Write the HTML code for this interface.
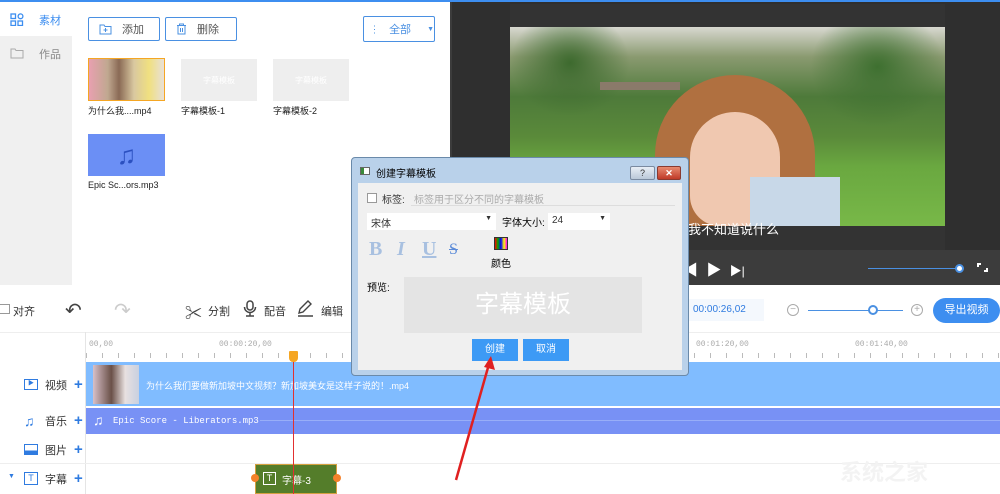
<!DOCTYPE html>
<html><head><meta charset="utf-8"><style>
*{margin:0;padding:0;box-sizing:border-box}
body{width:1000px;height:494px;overflow:hidden;position:relative;background:#fff;font-family:"Liberation Sans","Noto Sans CJK SC",sans-serif;font-size:11px;color:#333}
.a{position:absolute;white-space:nowrap}
.btn{position:absolute;border:1px solid #4a90e2;border-radius:2px;color:#4a90e2;font-size:11px;display:flex;align-items:center;padding-left:10px;gap:10px;background:#fff;white-space:nowrap}
.thumb{position:absolute;width:76px;height:42px;background:#eee;color:#fff;font-size:8px;display:flex;align-items:center;justify-content:center;white-space:nowrap}
.lbl{position:absolute;font-size:9px;color:#222;white-space:nowrap}
.tl{position:absolute;font-size:11px;color:#333;display:flex;align-items:center;gap:7px;white-space:nowrap}
.plus{color:#2f7be0;font-size:15px;font-weight:bold}
</style></head><body>
<div class="a" style="left:0;top:0;width:1000px;height:2px;background:#3d8ef0"></div>
<div class="a" style="left:0;top:2px;width:72px;height:283px;background:#f0f0f0"></div>
<div class="a" style="left:0;top:2px;width:72px;height:34px;background:#fff"></div>
<svg class="a" style="left:10px;top:13px" width="14" height="13"><g fill="none" stroke="#3d8ef0" stroke-width="1.3"><rect x="1" y="1" width="4.5" height="4.5"/><rect x="1" y="8" width="4.5" height="4.5"/><circle cx="10.5" cy="3.3" r="2.4"/><rect x="8" y="8" width="4.5" height="4.5"/></g></svg>
<div class="a" style="left:39px;top:12px;color:#3d8ef0;font-size:11px">素材</div>
<svg class="a" style="left:10px;top:47px" width="14" height="12"><path d="M1 2h4l1 1.5h7V11H1z" fill="none" stroke="#aaa"/></svg>
<div class="a" style="left:39px;top:46px;color:#888;font-size:11px">作品</div>
<div class="btn" style="left:88px;top:17px;width:72px;height:24px"><svg width="13" height="11"><path d="M1 1h4l1 1.5h6V10H1z M6.5 4v4M4.5 6h4" fill="none" stroke="#4a90e2"/></svg><span style="color:#555">添加</span></div>
<div class="btn" style="left:165px;top:17px;width:72px;height:24px"><svg width="11" height="12"><path d="M1 2.5h9M3.5 2.5V1h4v1.5M2 3v8h7V3M4.5 5v4M6.5 5v4" fill="none" stroke="#4a90e2"/></svg><span style="color:#555">删除</span></div>
<div class="btn" style="left:363px;top:16px;width:72px;height:26px;gap:12px"><svg width="11" height="9"><path d="M0 1h1M3 1h8M0 4.5h1M3 4.5h8M0 8h1M3 8h8" stroke="#4a90e2"/></svg><span>全部</span><span style="font-size:7px;margin-left:4px">▼</span></div>
<div class="a" style="left:88px;top:58px;width:77px;height:43px;border:1.5px solid #f5a623;background:linear-gradient(90deg,#e8a0b0 0%,#c0a890 25%,#8a6a55 40%,#d9c8a0 60%,#f0e080 80%,#e8e0d8 100%)"></div>
<div class="lbl" style="left:88px;top:104px">为什么我....mp4</div>
<div class="thumb" style="left:181px;top:59px">字幕模板</div><div class="lbl" style="left:181px;top:104px">字幕模板-1</div>
<div class="thumb" style="left:273px;top:59px">字幕模板</div><div class="lbl" style="left:273px;top:104px">字幕模板-2</div>
<div class="a" style="left:88px;top:134px;width:77px;height:42px;background:#6b8ff5;color:#2b50c0;font-size:26px;text-align:center;line-height:42px">♫</div>
<div class="lbl" style="left:88px;top:180px">Epic Sc...ors.mp3</div>
<div class="a" style="left:450px;top:2px;width:550px;height:283px;background:#3c3c3c"></div>
<div class="a" style="left:452px;top:2px;width:548px;height:248px;background:#2f2f2f"></div>
<div class="a" style="left:510px;top:4px;width:435px;height:246px;background:#333"></div>
<div class="a" style="left:510px;top:27px;width:435px;height:199px;overflow:hidden;background:linear-gradient(180deg,#d8d8d0 0%,#8a9a70 15%,#4e7a3a 35%,#5a8a3a 55%,#6aa840 70%,#78b848 100%)">
 <div class="a" style="left:0;top:0;width:120px;height:90px;background:radial-gradient(ellipse at 50% 40%,#3d6a2e,rgba(60,100,40,0) 70%)"></div>
 <div class="a" style="left:300px;top:0;width:135px;height:100px;background:radial-gradient(ellipse at 50% 40%,#3e7030,rgba(60,100,40,0) 70%)"></div>
 <div class="a" style="left:90px;top:55px;width:80px;height:8px;background:#8a7a6a"></div>
 <div class="a" style="left:145px;top:48px;width:160px;height:151px;border-radius:80px 80px 0 0;background:#b07040"></div>
 <div class="a" style="left:180px;top:85px;width:90px;height:114px;border-radius:45px 45px 30px 30px;background:#f0c8b0"></div>
 <div class="a" style="left:240px;top:150px;width:90px;height:49px;background:#c8d8e8"></div>
</div>
<div class="a" style="left:688px;top:219px;color:#fff;font-size:13px">我不知道说什么</div>
<div class="a" style="left:683px;top:259px;color:#fff;font-size:15px">◀ &nbsp;▶ &nbsp;<span style="font-size:12px">▶|</span></div>
<div class="a" style="left:868px;top:268px;width:92px;height:1px;background:#4a90e2"></div>
<div class="a" style="left:955px;top:264px;width:9px;height:9px;border-radius:50%;background:#fff;border:2px solid #4a90e2"></div>
<div class="a" style="left:977px;top:263px;border-left:2px solid #fff;border-top:2px solid #fff;width:4px;height:4px"></div>
<div class="a" style="left:984px;top:268px;width:4px;height:4px;border-right:2px solid #fff;border-bottom:2px solid #fff"></div>
<div class="a" style="left:0;top:332px;width:1000px;height:1px;background:#eee"></div>
<div class="a" style="left:0;top:304px;width:10px;height:10px;border:1px solid #999;border-left:none"></div>
<div class="a" style="left:13px;top:303px;font-size:11px">对齐</div>
<div class="a" style="left:65px;top:298px;font-size:20px;color:#444">↶</div>
<div class="a" style="left:114px;top:298px;font-size:20px;color:#ccc">↷</div>
<div class="a" style="left:185px;top:299px;font-size:17px;color:#444">✂</div><div class="a" style="left:208px;top:303px;font-size:11px">分割</div>
<svg class="a" style="left:243px;top:300px" width="14" height="17"><rect x="4" y="1" width="6" height="9" rx="3" fill="none" stroke="#444" stroke-width="1.5"/><path d="M1.5 7a5.5 5.5 0 0 0 11 0M7 12.5v3M3 16h8" fill="none" stroke="#444" stroke-width="1.5"/></svg><div class="a" style="left:264px;top:303px;font-size:11px">配音</div>
<svg class="a" style="left:297px;top:300px" width="17" height="17"><path d="M2 13l1-4 8-8 3 3-8 8z M1 16h15" fill="none" stroke="#444" stroke-width="1.4"/></svg><div class="a" style="left:321px;top:303px;font-size:11px">编辑</div>
<div class="a" style="left:688px;top:299px;width:76px;height:22px;background:#f4f8fd;color:#2f7be0;font-size:10px;line-height:22px;padding-left:5px">00:00:26,02</div>
<div class="a" style="left:787px;top:304px;width:12px;height:12px;border:1px solid #aaa;border-radius:50%;color:#aaa;font-size:10px;line-height:9px;text-align:center">−</div>
<div class="a" style="left:808px;top:310px;width:95px;height:1px;background:#4a90e2"></div>
<div class="a" style="left:868px;top:305px;width:10px;height:10px;border:2px solid #4a90e2;border-radius:50%;background:#fff"></div>
<div class="a" style="left:911px;top:304px;width:12px;height:12px;border:1px solid #aaa;border-radius:50%;color:#aaa;font-size:10px;line-height:10px;text-align:center">+</div>
<div class="a" style="left:933px;top:298px;width:67px;height:25px;border-radius:13px;background:#3d8ef0;color:#fff;font-size:11px;line-height:25px;text-align:center">导出视频</div>
<div class="a" style="left:85px;top:332px;width:1px;height:162px;background:#e5e5e5"></div>
<div class="a" style="left:89px;top:340px;font-size:8px;color:#aaa;font-family:'Liberation Mono',monospace">00,00</div>
<div class="a" style="left:219px;top:340px;font-size:8px;color:#aaa;font-family:'Liberation Mono',monospace">00:00:20,00</div>
<div class="a" style="left:696px;top:340px;font-size:8px;color:#aaa;font-family:'Liberation Mono',monospace">00:01:20,00</div>
<div class="a" style="left:855px;top:340px;font-size:8px;color:#aaa;font-family:'Liberation Mono',monospace">00:01:40,00</div>
<div class="a" style="left:86px;top:353px;width:914px;height:5px;background:repeating-linear-gradient(90deg,#bbb 0 1px,transparent 1px 16px)"></div>
<div class="a" style="left:86px;top:362px;width:914px;height:44px;background:#80bcff"></div>
<div class="a" style="left:93px;top:365px;width:46px;height:39px;background:linear-gradient(90deg,#d8c0c8,#6a5048 40%,#e8e0e0 70%,#c8d0e0)"></div>
<div class="a" style="left:146px;top:379px;color:#fff;font-size:9px">为什么我们要做新加坡中文视频？新加坡美女是这样子说的！.mp4</div>
<div class="a" style="left:86px;top:408px;width:914px;height:26px;background:#7891f5"></div>
<div class="a" style="left:93px;top:412px;color:#fff;font-size:14px">♫</div>
<div class="a" style="left:113px;top:416px;color:#fff;font-size:9px;font-family:'Liberation Mono',monospace">Epic Score - Liberators.mp3</div>
<div class="a" style="left:260px;top:420px;width:740px;height:1px;background:#98aef8"></div>
<div class="a" style="left:0;top:463px;width:1000px;height:1px;background:#eee"></div>
<div class="tl" style="left:24px;top:376px"><span style="width:14px;height:11px;border:1px solid #2f7be0;font-size:6px;color:#2f7be0;text-align:center;line-height:9px">▶</span>视频<span class="plus">+</span></div>
<div class="tl" style="left:24px;top:412px"><span style="color:#2f7be0;font-size:14px;width:14px">♫</span>音乐<span class="plus">+</span></div>
<div class="tl" style="left:24px;top:441px"><span style="width:14px;height:11px;border:1px solid #2f7be0;background:linear-gradient(0deg,#2f7be0 40%,#fff 40%)"></span>图片<span class="plus">+</span></div>
<div class="a" style="left:8px;top:473px;font-size:7px;color:#2f7be0">▼</div>
<div class="tl" style="left:24px;top:470px"><span style="width:14px;height:13px;border:1px solid #2f7be0;font-size:9px;color:#2f7be0;text-align:center;line-height:11px">T</span>字幕<span class="plus">+</span></div>
<div class="a" style="left:255px;top:464px;width:82px;height:30px;background:#547d2a;border:1px solid #d4a040"></div>
<div class="a" style="left:251px;top:474px;width:8px;height:8px;border-radius:50%;background:#f5822a"></div>
<div class="a" style="left:333px;top:474px;width:8px;height:8px;border-radius:50%;background:#f5822a"></div>
<div class="a" style="left:263px;top:472px;width:13px;height:13px;border:1px solid #fff;color:#fff;font-size:9px;text-align:center;line-height:11px">T</div>
<div class="a" style="left:282px;top:472px;color:#fff;font-size:10px">字幕-3</div>
<div class="a" style="left:293px;top:358px;width:1px;height:136px;background:#e23030"></div>
<div class="a" style="left:289px;top:351px;width:9px;height:11px;background:#f5a623;border-radius:1px 1px 4px 4px"></div>
<div class="a" style="left:840px;top:455px;font-size:22px;color:#f3f3f3;font-weight:bold">系统之家</div>
<div class="a" style="left:351px;top:157px;width:338px;height:219px;background:#b9d1ea;border:1px solid #6a8aaa;border-radius:4px"></div>
<div class="a" style="left:360px;top:167px;width:10px;height:8px;border:1px solid #666;background:linear-gradient(90deg,#3a8a3a 40%,#fff 40%)"></div>
<div class="a" style="left:376px;top:165px;font-size:10px;color:#000">创建字幕模板</div>
<div class="a" style="left:630px;top:166px;width:25px;height:14px;border:1px solid #7a8aa0;border-radius:2px;background:linear-gradient(#e8eef5,#bac8d8);font-size:9px;text-align:center;line-height:12px;color:#333">?</div>
<div class="a" style="left:657px;top:166px;width:24px;height:14px;border:1px solid #8a3a30;border-radius:2px;background:linear-gradient(#e88a70,#c03a28);font-size:9px;text-align:center;line-height:12px;color:#fff;font-weight:bold">✕</div>
<div class="a" style="left:358px;top:183px;width:324px;height:187px;background:#f0f0f0"></div>
<div class="a" style="left:367px;top:193px;width:10px;height:10px;border:1px solid #999;background:#fff"></div>
<div class="a" style="left:382px;top:191px;font-size:10px;color:#333">标签:</div>
<div class="a" style="left:414px;top:191px;font-size:10px;color:#aaa">标签用于区分不同的字幕模板</div>
<div class="a" style="left:411px;top:205px;width:264px;height:1px;background:#ddd"></div>
<div class="a" style="left:367px;top:213px;width:129px;height:17px;background:#fff;font-size:10px;padding:2px 4px">宋体<span style="float:right;font-size:7px">▼</span></div>
<div class="a" style="left:502px;top:214px;font-size:10px;color:#000">字体大小:</div>
<div class="a" style="left:548px;top:213px;width:62px;height:17px;background:#fff;font-size:10px;padding:2px 4px">24<span style="float:right;font-size:7px">▼</span></div>
<div class="a" style="left:369px;top:238px;font:bold 20px 'Liberation Serif',serif;color:#a8c0e0">B</div>
<div class="a" style="left:397px;top:238px;font:italic bold 20px 'Liberation Serif',serif;color:#a8c0e0">I</div>
<div class="a" style="left:422px;top:238px;font:bold 20px 'Liberation Serif',serif;color:#a8c0e0;text-decoration:underline">U</div>
<div class="a" style="left:449px;top:241px;font:16px 'Liberation Serif',serif;color:#5a8ad8;text-decoration:line-through">S</div>
<div class="a" style="left:494px;top:237px;width:14px;height:13px;background:linear-gradient(90deg,#f00,#0a0,#00f,#ff0,#f0f);border:1px solid #333"></div>
<div class="a" style="left:491px;top:255px;font-size:10px;color:#000">颜色</div>
<div class="a" style="left:367px;top:279px;font-size:10px;color:#000">预览:</div>
<div class="a" style="left:404px;top:277px;width:238px;height:56px;background:#e4e4e4;color:#fff;font-size:24px;text-align:center;line-height:56px">字幕模板</div>
<div class="a" style="left:472px;top:339px;width:46px;height:22px;background:#3d9af5;color:#fff;font-size:10px;text-align:center;line-height:22px">创建</div>
<div class="a" style="left:523px;top:339px;width:46px;height:22px;background:#3d9af5;color:#fff;font-size:10px;text-align:center;line-height:22px">取消</div>
<svg class="a" style="left:440px;top:350px" width="60" height="135"><path d="M16 130L49 14" stroke="#e02020" stroke-width="2.5"/><path d="M51 6l4 14-11-3z" fill="#e02020"/></svg>
</body></html>
